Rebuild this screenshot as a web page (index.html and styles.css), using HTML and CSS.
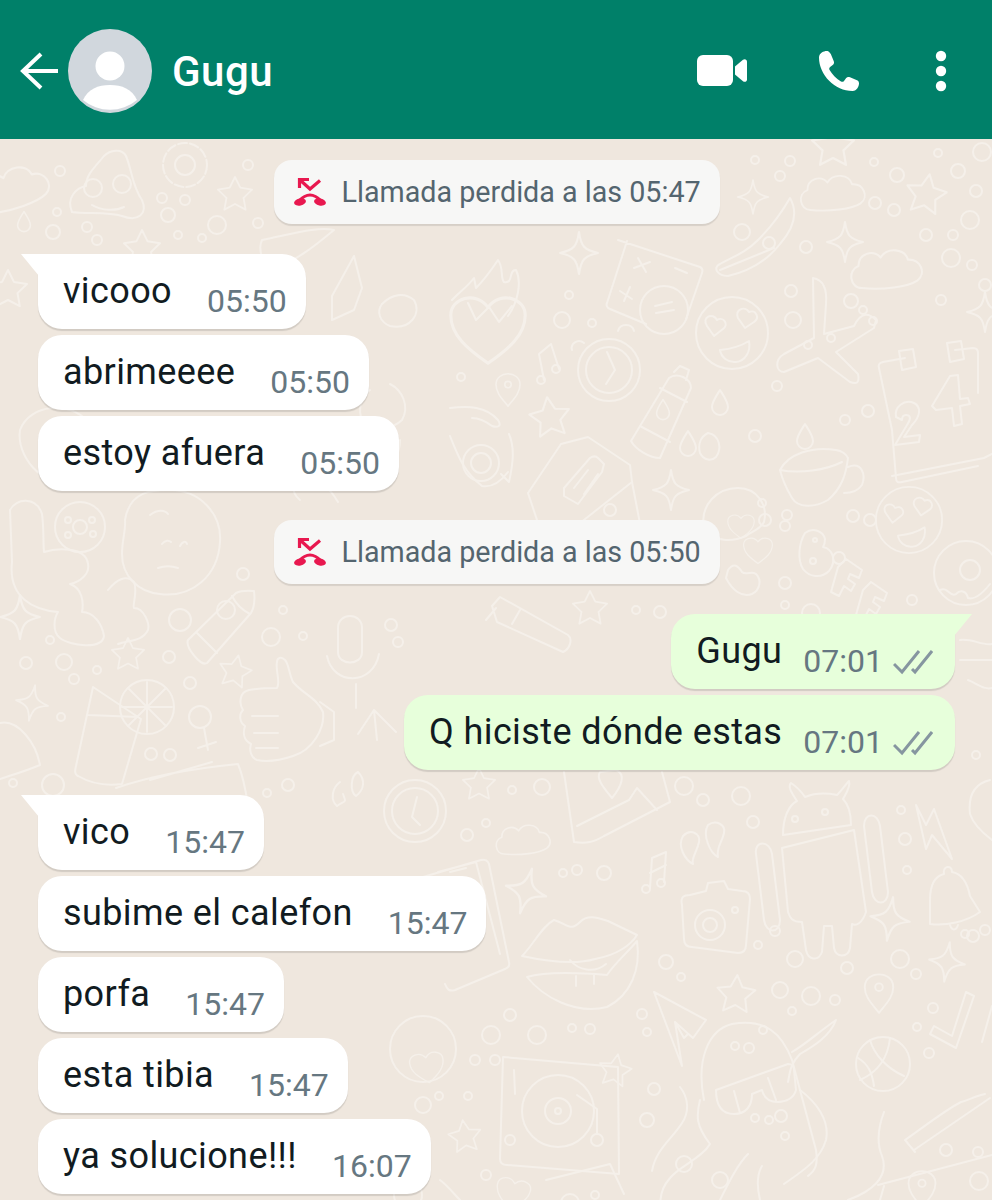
FILE: index.html
```html
<!DOCTYPE html>
<html lang="es">
<head>
    <meta charset="UTF-8">
    <meta name="viewport" content="width=device-width, initial-scale=1.0">
    <title>Gugu</title>
    <link rel="stylesheet" href="styles.css">
</head>
<body>
    <header class="topbar">
        <svg class="back" viewBox="0 0 40 38"><path d="M38 19H3M21 2 3 19l18 17"/></svg>
        <svg class="avatar" viewBox="0 0 84 84">
            <circle cx="42" cy="42" r="42" fill="#d1d7dd"/>
            <circle cx="42" cy="37" r="14.500" fill="#fff"/>
            <path d="M15 71c5-11 15-15 27-15s22 4 27 15a42 42 0 0 1-54 0z" fill="#fff"/>
        </svg>
        <h1 class="name">Gugu</h1>
        <div class="actions">
            <svg class="ico-video" viewBox="0 0 50 32"><rect width="36" height="31" rx="6"/><path d="M38 11.500 46 4.800c1.500-1.200 4-.6 4 2v17.400c0 2.600-2.500 3.200-4 2l-8-6.700z"/></svg>
            <svg class="ico-phone" viewBox="0 0 42 42"><path d="M8.500 1C6 1 1 3 1 7.500 1 25 17 41 34.500 41c4.500 0 6.500-5 6.500-7.500 0-1.500-.5-2.600-2-3.300l-7-2.900c-1.700-.7-3-.3-4 1l-2 2.600c-.8 1-1.900 1.100-3 .5-4.500-2.600-8.800-6.900-11.400-11.400-.6-1.100-.5-2.200.5-3l2.600-2c1.300-1 1.700-2.300 1-4l-2.900-7C11.100 1.500 10 1 8.500 1z"/></svg>
            <svg class="ico-dots" viewBox="0 0 12 42"><circle cx="6" cy="6" r="5.200"/><circle cx="6" cy="21" r="5.200"/><circle cx="6" cy="36" r="5.200"/></svg>
        </div>
    </header>

    <main class="chat">
        <svg class="wallpaper" viewBox="0 139 992 1061">
            <defs>
                <path id="star" d="M0-20 5.900-8.100 19-6 9.500 3.100 11.800 16.200 0 10-11.800 16.200-9.500 3.100-19-6-5.900-8.100z"/>
                <path id="spark" d="M0-20C2-6 5-3 18 0 5 3 2 6 0 20-2 6-5 3-18 0-5-3-2-6 0-20z"/>
                <path id="cloud" d="M-26 20c-11 0-14-17-3-21 0-12 14-16 21-8 6-10 23-9 26 2 12-1 18 13 9 20-9 6-33 9-53 7z"/>
                <path id="drop" d="M0-13C5-5 8-1 8 4a8 8 0 0 1-16 0c0-5 3-9 8-17z"/>
                <path id="heart" d="M0 24C-13 15-24 6-24-7c0-11 16-16 24-5 8-11 24-6 24 5C24 6 13 15 0 24z"/>
                <g id="pin"><path d="M0 24C-8 14-15 7-15-3c0-18 30-18 30 0C15 7 8 14 0 24z"/><circle cy="-3" r="4"/></g>
                <g id="face"><circle r="36"/><path d="M-25-7c-6-9 6-14 10-6 7-4 12 5 6 9l-9 7zM6-15c-4-8 7-13 11-6 7-3 11 6 5 10l-9 6zM-12 17c11-1 21-4 29-9 2 11-4 20-13 21-8 1-15-5-16-12z"/></g>
            </defs>
            <g class="doodles">
                <!-- top left -->
                <use href="#cloud" transform="translate(14 186) rotate(-12) scale(1.100)"/>
                <path d="M72 212c-6-14 4-24 14-26 0-12 10-20 18-30 6-6 18-8 22 0 6 14 6 30 16 44 6 14-4 22-20 16-14-4-36-2-50-4z"/><circle cx="93" cy="188" r="9"/><circle cx="122" cy="184" r="9"/><path d="M92 205c10 6 24 6 32 2"/>
                <circle cx="185" cy="165" r="22" stroke-dasharray="9 3"/><circle cx="185" cy="165" r="10"/>
                <use href="#star" transform="translate(235 195) scale(.9)"/>
                <use href="#star" transform="translate(142 249) scale(.95)"/>
                <use href="#star" transform="translate(8 290) scale(1)"/>
                <use href="#drop" transform="translate(24 222) scale(.8)"/>
                <circle cx="60" cy="171" r="5"/><circle cx="162" cy="198" r="5"/><circle cx="185" cy="200" r="5"/><circle cx="168" cy="215" r="7"/><circle cx="217" cy="225" r="9"/><circle cx="248" cy="165" r="5"/><circle cx="258" cy="223" r="5"/><circle cx="57" cy="212" r="4"/><circle cx="53" cy="232" r="7"/><circle cx="87" cy="227" r="5"/><circle cx="97" cy="240" r="5"/><circle cx="178" cy="235" r="4"/><circle cx="202" cy="238" r="4"/>
                <path d="M262 240c30-6 56-14 72-10-10 8-34 30-60 38-12 0-16-20-12-28z"/><path d="M332 296l22-40 8 32-8 22-22 10z"/>
                <path d="M382 304c10-10 22-12 32-4 8 14-4 30-24 26-10-4-14-14-8-22z"/>
                <!-- left, beside first bubbles -->
                <path d="M20 430c10-26 50-30 68-8 14 20 6 50-20 60-26 4-52-26-48-52z"/>
                <path d="M300 500c-10-8-8-20 4-22 14 0 26 10 34 24"/>
                <!-- cookie and fist -->
                <circle cx="80" cy="527" r="25"/><circle cx="80" cy="527" r="7"/><circle cx="68" cy="520" r="3"/><circle cx="92" cy="520" r="3"/><circle cx="68" cy="535" r="3"/><circle cx="93" cy="534" r="3"/>
                <path d="M125 520c5-32 33-30 45-30 30 0 52 24 50 52-2 34-28 56-60 52-22-2-38-18-38-40 0-14 4-24 3-34z"/>
                <path d="M150 515c8-6 15-5 18-1M162 544c3-4 7-4 9-2M180 546c2-4 6-6 7-2M158 568c6-2 14-2 20 0"/>
                <path d="M10 510c6-12 26-14 32 4 2 14 1 28 2 38 12-4 42-6 44 12 2 10-8 18-18 20 12 4 14 18 12 28 12 0 20 12 22 24-2 14-34 10-44 2-8-6-6-20-2-26-24-2-50-14-46-50z"/><path d="M108 590c8-10 18-16 26-8 4 10-2 24 0 26 10 0 16 16 14 22-6 12-20 10-30 14"/>
                <use href="#spark" transform="translate(20 617) scale(1.100)"/>
                <path d="M188 640l48-47c6-3 15-2 18-2 1 8 1 15-3 22l-44 50c-6 4-22-16-19-23zM197 633l20 20M232 596c4 8 10 14 18 18"/>
                <circle cx="180" cy="620" r="11"/><circle cx="271" cy="637" r="9"/><circle cx="283" cy="610" r="4"/><circle cx="303" cy="636" r="4"/><circle cx="50" cy="640" r="4"/><circle cx="26" cy="663" r="6"/><circle cx="64" cy="662" r="8"/><circle cx="97" cy="670" r="4"/><circle cx="169" cy="657" r="6"/><circle cx="74" cy="679" r="5"/><circle cx="190" cy="683" r="6"/><circle cx="226" cy="610" r="9"/><circle cx="243" cy="574" r="6"/><circle cx="61" cy="717" r="4"/><circle cx="151" cy="754" r="6"/><circle cx="170" cy="755" r="6"/>
                <use href="#star" transform="translate(128 655) scale(.85)"/>
                <use href="#star" transform="translate(235 672) rotate(12) scale(.85)"/>
                <path d="M338 628c0-16 24-16 24 0v24c0 14-24 14-24 0zM327 656c6 30 46 30 52-2M356 684v24"/>
                <circle cx="391" cy="625" r="6"/><circle cx="398" cy="642" r="5"/>
                <!-- juice, lollipop, thumb -->
                <path d="M93 687l48 32-19 65c-14 2-30 0-44-8-4-2-3-6-2-10zM88 715l50 2"/>
                <circle cx="147" cy="707" r="27"/><path d="M147 682v50M122 707h50M129 689l36 36M165 689l-36 36"/>
                <circle cx="200" cy="717" r="11"/><path d="M204 728l4 22M198 748l18-6"/>
                <path d="M285 660c4 4 4 14 8 22 10 12 24 16 30 30 2 16-10 38-30 44-12 4-26 6-36 4-6-2-8-10-6-16-8-4-8-12-6-18-6-4-6-12-2-16-4-6-4-18 6-20 10-2 20-2 28-2 4-6-2-18 0-26 0-4 4-6 8-2z"/>
                <path d="M252 716h26M254 733h24M256 748h22M320 702l14 10v28l-14 6"/>
                <path d="M358 734l16-24 22 22M374 710l3 30"/>
                <use href="#spark" transform="translate(32 703) rotate(10) scale(.9)"/>
                <path d="M0 723c18-4 36 20 40 42-14 6-28 10-40 14"/>
                <path d="M116 788c40-14 82-20 122-24 6 14 8 28 10 42M150 780l62-18"/>
                <circle cx="53" cy="785" r="11"/><circle cx="13" cy="783" r="4"/><circle cx="288" cy="785" r="6"/><circle cx="267" cy="793" r="4"/>
                <path d="M340 782c-8 6-10 18-3 24 8-6 10-2 6-12M358 772c-8 4-8 20-2 24 8-6 10-16 2-24"/>
                <!-- free area beside the middle bubbles -->
                <path d="M370 390c-10 8-12 20-8 30 14 10 30 10 40 0 8-14 0-30-12-36M400 440c0 12-6 24-14 30"/>
                <!-- heart with flames -->
                <use href="#heart" transform="translate(488 326) scale(1.550)"/>
                <path d="M468 303l8 17 13-13 10 15 13-16"/>
                <path d="M452 300c10-10 16-14 22-22l2 10c10-10 14-16 22-28 6 8 2 18 6 22 10 2 4-12 12-12 6 12 2 32-8 46"/>
                <circle cx="569" cy="295" r="4"/><circle cx="562" cy="320" r="8"/><circle cx="592" cy="323" r="4"/><circle cx="461" cy="377" r="4"/>
                <use href="#spark" transform="translate(579 253) scale(1.050)"/>
                <!-- calculator -->
                <path d="M618 240l82 27c2 1 3 3 2 6l-16 46M646 324l-36-15c-3-1-4-4-3-6l20-62"/>
                <circle cx="664" cy="310" r="24"/><path d="M655 306l17-4M656 313l18-3"/>
                <path d="M638 258l8 14M634 268l16-6M620 291l12 8M624 301l6-14M675 268l12 5"/>
                <!-- banana -->
                <path d="M790 198c8 14 4 30-10 46-14 18-34 28-52 32-10 0-16-8-8-12 14-8 24-10 38-24 14-14 24-28 32-42zM720 270l54-22"/>
                <!-- clock, notes, bottle -->
                <circle cx="609" cy="370" r="31"/><circle cx="609" cy="370" r="23"/><path d="M607 352l8 18-9 14"/><path d="M572 350c-2-6 6-12 12-7M618 331c2-8 14-8 16 0"/>
                <path d="M539 354l12-10 8 25M539 354l5 26"/><circle cx="541" cy="380" r="4"/><circle cx="556" cy="369" r="4"/>
                <use href="#pin" transform="translate(508 387) scale(.8)"/>
                <path d="M631 441l38-63c8-6 22 0 22 10l-31 70c-10 0-24-8-29-17zM674 372l6-6 9 4-3 10M640 426l30 16M660 388l27 14"/>
                <use href="#drop" transform="translate(663 410) scale(.8)"/>
                <use href="#drop" transform="translate(720 403)"/>
                <use href="#drop" transform="translate(688 444)"/>
                <use href="#drop" transform="translate(805 437)"/>
                <path d="M708 433c-8 4-10 12-8 20 4 8 12 8 16 4 6-8 4-22-8-24z"/>
                <!-- face and plane -->
                <use href="#face" transform="translate(732 333)"/>
                <path d="M813 278c12 2 14 14 13 26l-2 30 30-8c8-16 16-12 22-6l-2 8-38 24 22 22c2 10-2 10-8 8l-32-24-34 14c-8 0-10-12 0-18l30-16z"/>
                <circle cx="793" cy="320" r="8"/><circle cx="851" cy="301" r="7"/><circle cx="808" cy="345" r="4"/><circle cx="831" cy="338" r="4"/><circle cx="791" cy="291" r="6"/>
                <!-- top right -->
                <use href="#star" transform="translate(833 147) scale(1.100)"/>
                <use href="#cloud" transform="translate(835 191) scale(.95)"/>
                <use href="#star" transform="translate(926 195) rotate(10) scale(1.050)"/>
                <use href="#spark" transform="translate(753 197) scale(.85)"/>
                <use href="#spark" transform="translate(845 242)"/>
                <use href="#cloud" transform="translate(889 267) scale(1.050)"/>
                <use href="#spark" transform="translate(985 312)"/>
                <circle cx="755" cy="160" r="4"/><circle cx="790" cy="161" r="5"/><circle cx="780" cy="176" r="5"/><circle cx="874" cy="162" r="4"/><circle cx="897" cy="175" r="7"/><circle cx="938" cy="153" r="4"/><circle cx="958" cy="171" r="7"/><circle cx="976" cy="191" r="6"/><circle cx="982" cy="152" r="9"/><circle cx="875" cy="203" r="6"/><circle cx="894" cy="210" r="6"/><circle cx="970" cy="220" r="9"/><circle cx="926" cy="235" r="6"/><circle cx="953" cy="235" r="5"/><circle cx="951" cy="258" r="9"/><circle cx="972" cy="265" r="5"/><circle cx="742" cy="232" r="8"/><circle cx="806" cy="247" r="6"/><circle cx="769" cy="243" r="6"/>
                <!-- calendar -->
                <path d="M905 358l-22 4c-4 1-5 3-4 6l13 62M955 350l18-2c4 0 5 2 5 5v40M892 430l4 48c0 4 2 5 6 4l76-16"/>
                <path d="M899 351l14-2 3 18-14 3zM947 343l14-2 3 18-14 3z"/>
                <path d="M896 417c-2-10 8-18 18-14 8 4 6 14-2 22l-8 12 16-2-1 7-24 3 12-20c4-6 4-10-1-10-3 0-4 2-4 5z"/><path d="M950 376l-18 30 4 4 16-2 2 18 8-2-2-18 10-2-2-6-8 1-2-24z"/>
                <path d="M892 476l92-18 8-4"/>
                <circle cx="863" cy="310" r="4"/><circle cx="941" cy="300" r="5"/><circle cx="985" cy="285" r="6"/><circle cx="873" cy="321" r="4"/><circle cx="845" cy="420" r="5"/><circle cx="868" cy="411" r="6"/><circle cx="755" cy="436" r="6"/><circle cx="777" cy="386" r="5"/>
                <!-- cup, face with heart, star -->
                <path d="M780 470c8-16 32-24 56-20 6 1 10 4 12 8-2 16-6 30-20 42-14 8-30 8-36-2-6-10-10-20-12-28zM780 470c20 4 46 0 62-8M848 467c14-6 18 8 14 18-4 6-10 8-18 8"/>
                <use href="#spark" transform="translate(671 490) scale(1)"/>
                <circle cx="765" cy="520" r="6"/><circle cx="787" cy="515" r="5"/><circle cx="853" cy="516" r="6"/>
                <path d="M704 530c-5-26 14-42 34-42 20 0 30 18 26 34-4 8-14 10-18 14-14 6-30 6-42-6z"/>
                <use href="#heart" transform="translate(741 525) scale(.55)"/>
                <circle cx="610" cy="510" r="6"/>
                <!-- sunglasses -->
                <path d="M450 408c18-2 36-2 48 12 4 6 0 8-6 6-8-6-14-8-20-8M509 434c6 14 4 30 0 48l-8-8M450 436c8 20 14 36 32 50 12 2 20-6 26-14"/><circle cx="481" cy="463" r="18"/><circle cx="481" cy="463" r="10"/>
                <use href="#star" transform="translate(550 418) rotate(-8) scale(1.050)"/>
                <!-- wallet -->
                <path d="M528 493l33-49 27-7 42 28 2 17-57 45M528 493l14 42"/><path d="M564 488l26-30c3-2 6-2 8 0l6 6-2 8-24 32-14-8zM574 488l14-18M584 494l14-20"/>
                <path d="M632 482l10 52"/>
                <!-- BFF and donut -->
                <use href="#face" transform="translate(909 520) scale(.92)"/>
                <path d="M805 533c8-6 18-2 20 6 0 5-2 8-2 8 10 2 14 14 6 24-8 8-20 6-26-2-6-10-4-26 2-36z"/><circle cx="815" cy="540" r="2"/><circle cx="813" cy="561" r="3"/>
                <path d="M838 567l8-8 16 11-3 8-9-4-2 5 7 5-4 7-7-5-5 10-8-4zM863 590l8-8 16 11-3 8-9-4-2 5 7 5-4 7-7-5-5 10-8-4z"/>
                <circle cx="966" cy="573" r="32"/><circle cx="970" cy="570" r="10"/><path d="M940 590c8-4 10 8 16 4 4-4 10-4 12 4 6 2 14-4 22-14"/>
                <use href="#heart" transform="translate(758 549) scale(.6)"/>
                <path d="M728 570c6-8 10-4 14 2 4 4 10-2 14 2 6 6 4 16-4 20-10 4-20-4-26-16z"/>
                <circle cx="762" cy="503" r="4"/><circle cx="785" cy="526" r="5"/><circle cx="785" cy="583" r="6"/><circle cx="785" cy="605" r="4"/><circle cx="811" cy="613" r="9"/><circle cx="839" cy="558" r="6"/><circle cx="912" cy="600" r="5"/><circle cx="870" cy="520" r="6"/>
                <use href="#star" transform="translate(590 609) scale(.9)"/>
                <path d="M492 606l8-9 68 38c5 4 2 14-5 17l-66-30zM486 620l10-12M520 610l-8 14"/>
                <circle cx="636" cy="610" r="4"/><circle cx="660" cy="612" r="6"/><circle cx="610" cy="570" r="4"/>
                <!-- right edge -->
                <path d="M960 640c12-2 22 6 32 4M968 680c10 4 16 10 24 8M960 660h32"/>
                <path d="M990 780c-16 4-22 16-20 34 4 12 14 20 22 26"/>
                <circle cx="976" cy="755" r="4"/>
                <!-- lower middle: clock, cloud, map -->
                <circle cx="415" cy="811" r="31"/><circle cx="415" cy="811" r="23"/><path d="M417 797l-5 20 8 8"/>
                <use href="#star" transform="translate(479 785) scale(.85)"/>
                <use href="#cloud" transform="translate(525 838) scale(.8)"/>
                <circle cx="467" cy="835" r="6"/><circle cx="486" cy="823" r="4"/><circle cx="512" cy="790" r="4"/><circle cx="542" cy="787" r="8"/>
                <path d="M564 772l10 70c12 2 20 0 30-6l66-34-8-30"/><path d="M577 826l52-26 8-12 20 22M600 772c-4 6 2 14 12 26 10-12 14-24 4-28z"/>
                <circle cx="684" cy="786" r="9"/><circle cx="703" cy="800" r="6"/><circle cx="741" cy="796" r="9"/><circle cx="753" cy="822" r="6"/>
                <!-- tablet -->
                <path d="M423 877l58-17c4-1 7 1 8 4l20 98c1 4-1 6-4 7l-50 21c-6 2-8-1-10-6M438 872l38-10 24 92M450 872l16-4"/>
                <use href="#spark" transform="translate(526 891) rotate(15) scale(1.150)"/>
                <circle cx="563" cy="873" r="4"/><circle cx="577" cy="870" r="5"/><circle cx="604" cy="873" r="7"/>
                <path d="M683 836c8-8 18-2 16 6-2 10-8 16-6 22-8-4-16-18-10-28zM708 825c8-6 18 0 16 8-2 10-8 14-6 24-8-4-16-22-10-32z"/>
                <path d="M652 858l14-6-2 30M652 858l-2 30M666 865l-16 8"/><circle cx="646" cy="889" r="4"/><circle cx="661" cy="883" r="4"/>
                <!-- lips -->
                <path d="M522 956c12-12 20-30 32-36 14 4 16 12 26 2 8-8 18-4 28-1l29 14c-6 10-20 20-42 24-20 6-50 2-73-3z"/><path d="M527 977c20-6 56-4 80-2 8-12 20-22 30-34 4 28-6 54-30 66-32 8-64-10-80-30zM570 960c8 10 24 14 36 4M576 976v10M594 974v10"/>
                <!-- camera -->
                <path d="M682 905c-2-8 2-10 8-10l16-4 2-8 16-2 4 8 14 2c6 0 8 4 8 8l-4 46c0 6-4 8-8 8l-46-6c-6 0-8-4-8-8z"/><circle cx="710" cy="925" r="15"/><circle cx="710" cy="925" r="7"/><circle cx="735" cy="910" r="3"/>
                <!-- android -->
                <path d="M783 835c0-18 6-30 14-34-4-6-10-14-6-18 6 4 10 8 14 14 10-4 22-4 32-2 6-6 8-10 12-14 2 6-4 14-6 18 6 6 8 16 8 26z"/><circle cx="795" cy="819" r="3"/><circle cx="825" cy="812" r="3"/>
                <path d="M782 848l72-18 12 82c-4 12-10 14-14 12l-2 24c-2 10-14 10-16 0l-2-22h-8l-2 26c-4 10-14 8-16-2l-4-28c-10 0-12-4-14-10z"/>
                <path d="M756 854c-2-14 14-14 16 0l8 66c0 14-14 14-16 0zM864 826c0-14 14-14 16 0l8 66c0 14-14 14-16 0z"/>
                <path d="M916 805l10 20 8-16 18 50-20-24-6 14z"/>
                <circle cx="905" cy="839" r="6"/><circle cx="901" cy="810" r="4"/><circle cx="907" cy="870" r="4"/>
                <path d="M930 900c0-18 6-24 14-26-2-8 8-10 8-2 12 2 16 14 18 24l10 16c-14 10-34 14-50 12z"/><path d="M950 925c2 6 6 6 8 0"/>
                <use href="#spark" transform="translate(890 919) rotate(8) scale(1.100)"/>
                <use href="#spark" transform="translate(947 962) rotate(8) scale(1)"/>
                <circle cx="775" cy="931" r="5"/><circle cx="758" cy="945" r="4"/><circle cx="795" cy="959" r="8"/><circle cx="847" cy="968" r="6"/><circle cx="900" cy="959" r="9"/><circle cx="916" cy="974" r="5"/><circle cx="965" cy="934" r="4"/><circle cx="973" cy="936" r="6"/><circle cx="985" cy="930" r="5"/>
                <use href="#pin" transform="translate(879 990) scale(.95)"/>
                <use href="#star" transform="translate(736 995) rotate(4) scale(1)"/>
                <circle cx="780" cy="990" r="8"/><circle cx="811" cy="996" r="9"/><circle cx="835" cy="1000" r="5"/><circle cx="792" cy="1011" r="4"/><circle cx="666" cy="962" r="7"/><circle cx="681" cy="977" r="4"/><circle cx="933" cy="1008" r="5"/><circle cx="917" cy="1027" r="4"/><circle cx="929" cy="1053" r="5"/><circle cx="642" cy="1014" r="5"/><circle cx="647" cy="1032" r="4"/>
                <path d="M654 992l52 28-13 18-18-16 7 44zM675 1022l9 16 4-4"/>
                <path d="M966 992l8 4-18 52-26-14 4-8 18 10zM992 1006l-10 36"/>
                <circle cx="883" cy="1064" r="27"/><path d="M870 1040c4 14 16 28 34 36M890 1038c-2 20-12 34-30 42M858 1058c10 6 14 14 16 28"/>
                <!-- ghost with sunglasses and tentacles -->
                <path d="M704 1100c-8-40 4-70 28-76 34-6 50 10 60 36l24 90c2 14 0 20-8 26"/>
                <path d="M716 1090l72-26c4 0 6 2 6 6l2 20c-2 8-10 12-18 12-8 0-14-4-16-12l-10 4c0 12-6 20-18 20-12 0-18-8-18-24zM734 1091l6 22M768 1078l8 22"/>
                <path d="M792 1052c14-8 24-18 44-32-6 16-22 26-36 34-10 10-10 18-12 28M700 1100c-4 16-4 26 10 44-8 14-30 22-40 34-14 16-12 36 2 52M680 1087c8 10 10 24 2 36-10 16-26 26-30 48"/>
                <path d="M800 1090c16 12 30 30 26 50-6 20-22 30-42 44M884 1112c-6 16-8 30-2 44 8 22-12 36-34 44"/>
                <circle cx="735" cy="1046" r="4"/><circle cx="749" cy="1048" r="5"/><circle cx="763" cy="1030" r="4"/><circle cx="755" cy="1118" r="4"/><circle cx="769" cy="1120" r="4"/><circle cx="781" cy="1116" r="6"/><circle cx="785" cy="1136" r="4"/><circle cx="654" cy="1089" r="6"/><circle cx="647" cy="1120" r="7"/><circle cx="684" cy="1164" r="8"/><circle cx="720" cy="1180" r="8"/>
                <!-- turntable -->
                <path d="M503 1057l115 10 1 107-112-9c-4 0-7-2-7-6z"/><circle cx="558" cy="1111" r="36"/><circle cx="558" cy="1111" r="13"/><circle cx="558" cy="1111" r="3"/><path d="M577 1095l20 14v24"/><circle cx="597" cy="1140" r="6"/><circle cx="510" cy="1140" r="5"/>
                <path d="M514 1070l1 24"/>
                <use href="#star" transform="translate(615 1071) rotate(10) scale(.85)"/>
                <use href="#star" transform="translate(465 1137) rotate(-8) scale(.85)"/>
                <circle cx="423" cy="1049" r="33"/><use href="#heart" transform="translate(427 1066) rotate(-8) scale(.7)"/>
                <circle cx="491" cy="1035" r="9"/><circle cx="510" cy="1015" r="6"/><circle cx="537" cy="1035" r="9"/><circle cx="572" cy="1028" r="4"/><circle cx="590" cy="1029" r="5"/><circle cx="495" cy="1060" r="5"/><circle cx="475" cy="1060" r="5"/><circle cx="423" cy="1105" r="8"/><circle cx="439" cy="1096" r="4"/><circle cx="468" cy="1096" r="4"/><circle cx="486" cy="1175" r="5"/>
                <!-- bottom row -->
                <use href="#heart" transform="translate(513 1192) rotate(12) scale(.7)"/>
                <circle cx="570" cy="1203" r="9"/><circle cx="595" cy="1195" r="4"/>
                <circle cx="408" cy="1195" r="14"/><path d="M440 1180c8 6 14 14 20 20"/>
                <path d="M546 1180l64-16 14 30"/>
                <path d="M720 1200c10-20 18-36 28-46M760 1200c-4-16-2-28 2-34"/>
                <path d="M905 1140c12-8 40-30 56-38 8-2 14-6 24-8M914 1150l76-52M905 1140l10 12"/>
                <circle cx="946" cy="1150" r="6"/><circle cx="978" cy="1152" r="5"/><circle cx="979" cy="1181" r="9"/>
                <use href="#pin" transform="translate(922 1186) scale(.9)"/>
                <path d="M878 1185l114-30M880 1200l4-14"/>
            </g>
        </svg>

        <div class="notice">
            <svg class="missed" viewBox="0 0 32 28"><path d="M5.500 10V1.500H15M5.500 1.500 16 11 26 2.500" class="missed-line"/><path d="M5 23Q16 11 27 23" class="missed-line"/><ellipse cx="6" cy="24" rx="6" ry="3.500" transform="rotate(-12 6 24)" class="missed-phone"/><ellipse cx="26" cy="24" rx="6" ry="3.500" transform="rotate(12 26 24)" class="missed-phone"/></svg>
            <span>Llamada perdida a las 05:47</span>
        </div>

        <section class="group">
            <div class="bubble in tail"><span class="text">vicooo</span><span class="time">05:50</span></div>
            <div class="bubble in"><span class="text">abrimeeee</span><span class="time">05:50</span></div>
            <div class="bubble in"><span class="text">estoy afuera</span><span class="time">05:50</span></div>
        </section>

        <div class="notice notice-tight">
            <svg class="missed" viewBox="0 0 32 28"><path d="M5.500 10V1.500H15M5.500 1.500 16 11 26 2.500" class="missed-line"/><path d="M5 23Q16 11 27 23" class="missed-line"/><ellipse cx="6" cy="24" rx="6" ry="3.500" transform="rotate(-12 6 24)" class="missed-phone"/><ellipse cx="26" cy="24" rx="6" ry="3.500" transform="rotate(12 26 24)" class="missed-phone"/></svg>
            <span>Llamada perdida a las 05:50</span>
        </div>

        <section class="group">
            <div class="bubble out tail"><span class="text">Gugu</span><span class="time">07:01</span><svg class="ticks" viewBox="0 0 40 26"><path d="M1 15l8 8L26 2M19 20l3 3L39 2"/></svg></div>
            <div class="bubble out"><span class="text">Q hiciste dónde estas</span><span class="time">07:01</span><svg class="ticks" viewBox="0 0 40 26"><path d="M1 15l8 8L26 2M19 20l3 3L39 2"/></svg></div>
        </section>

        <section class="group group-tight">
            <div class="bubble in tail"><span class="text">vico</span><span class="time">15:47</span></div>
            <div class="bubble in"><span class="text">subime el calefon</span><span class="time">15:47</span></div>
            <div class="bubble in"><span class="text">porfa</span><span class="time">15:47</span></div>
            <div class="bubble in"><span class="text">esta tibia</span><span class="time">15:47</span></div>
            <div class="bubble in"><span class="text">ya solucione!!!</span><span class="time">16:07</span></div>
        </section>
    </main>
</body>
</html>
```

FILE: styles.css
```css
* {
    box-sizing: border-box;
}

html, body {
    margin: 0;
    padding: 0;
    height: 1200px;
    overflow: hidden;
}

body {
    font-family: Roboto, "Liberation Sans", sans-serif;
    background-color: #efe7de;
    display: flex;
    flex-direction: column;
}

.topbar {
    height: 139px;
    flex: none;
    background-color: #008069;
    color: #ffffff;
    display: flex;
    align-items: center;
    padding: 3px 0 0 20px;
}

.back {
    width: 40px;
    height: 38px;
    fill: none;
    stroke: #ffffff;
    stroke-width: 4;
}

.avatar {
    width: 84px;
    height: 84px;
    margin-left: 8px;
}

.name {
    margin: 0 0 0 20px;
    font-size: 42px;
    font-weight: 500;
    letter-spacing: 0.5px;
}

.actions {
    margin-left: auto;
    display: flex;
    align-items: center;
    padding-right: 45px;
    fill: #ffffff;
}

.ico-video {
    width: 50px;
    height: 32px;
    margin-right: 71px;
}

.ico-phone {
    width: 42px;
    height: 42px;
    margin-right: 75px;
}

.ico-dots {
    width: 12px;
    height: 42px;
}

.chat {
    position: relative;
    flex: 1;
    padding: 21px 37px 0 38px;
    display: flex;
    flex-direction: column;
    gap: 30px;
    overflow: hidden;
}

.wallpaper {
    position: absolute;
    top: 0;
    left: 0;
    width: 992px;
    height: 1061px;
}

.doodles {
    fill: none;
    stroke: #f5f0ea;
    stroke-width: 2;
    stroke-linejoin: round;
    stroke-linecap: round;
}

.notice {
    position: relative;
    align-self: center;
    height: 64px;
    width: 446px;
    padding-left: 20px;
    display: flex;
    align-items: center;
    gap: 16px;
    background-color: #f7f7f6;
    border-radius: 18px;
    box-shadow: 0 2px 1px rgba(0, 0, 0, 0.1);
    color: #54656f;
    font-size: 28.700px;
    white-space: nowrap;
}

.notice-tight {
    margin-top: -1px;
}

.missed {
    width: 32px;
    height: 28px;
    flex: none;
}

.missed-line {
    fill: none;
    stroke: #e8184f;
    stroke-width: 3.200;
}

.missed-phone {
    fill: #e8184f;
}

.group {
    position: relative;
    display: flex;
    flex-direction: column;
    gap: 6px;
}

.group-tight {
    margin-top: -5px;
}

.bubble {
    position: relative;
    display: flex;
    height: 75px;
    padding: 17px 19px 9px 25px;
    border-radius: 24px;
    box-shadow: 0 2px 1px rgba(0, 0, 0, 0.12);
    white-space: nowrap;
}

.bubble.in {
    align-self: flex-start;
    background-color: #ffffff;
}

.bubble.out {
    align-self: flex-end;
    background-color: #e7ffdb;
    padding-right: 22px;
}

.bubble.in.tail {
    border-top-left-radius: 0;
}

.bubble.out.tail {
    border-top-right-radius: 0;
}

.bubble.tail::before {
    content: "";
    position: absolute;
    top: 0;
    width: 18px;
    height: 22px;
}

.bubble.in.tail::before {
    left: -17px;
    background-color: #ffffff;
    clip-path: polygon(0 0, 100% 0, 100% 100%);
}

.bubble.out.tail::before {
    right: -17px;
    background-color: #e7ffdb;
    clip-path: polygon(0 0, 100% 0, 0 100%);
}

.text {
    font-size: 36px;
    line-height: 40px;
    letter-spacing: 0.4px;
    color: #111b21;
}

.time {
    align-self: flex-end;
    margin: 0 0 4px 35px;
    font-size: 32px;
    line-height: 30px;
    color: #667781;
}

.out .time {
    margin-left: 21px;
}

.ticks {
    align-self: flex-end;
    width: 40px;
    height: 26px;
    margin: 0 0 5px 10px;
    fill: none;
    stroke: #8696a0;
    stroke-width: 3;
}
```
